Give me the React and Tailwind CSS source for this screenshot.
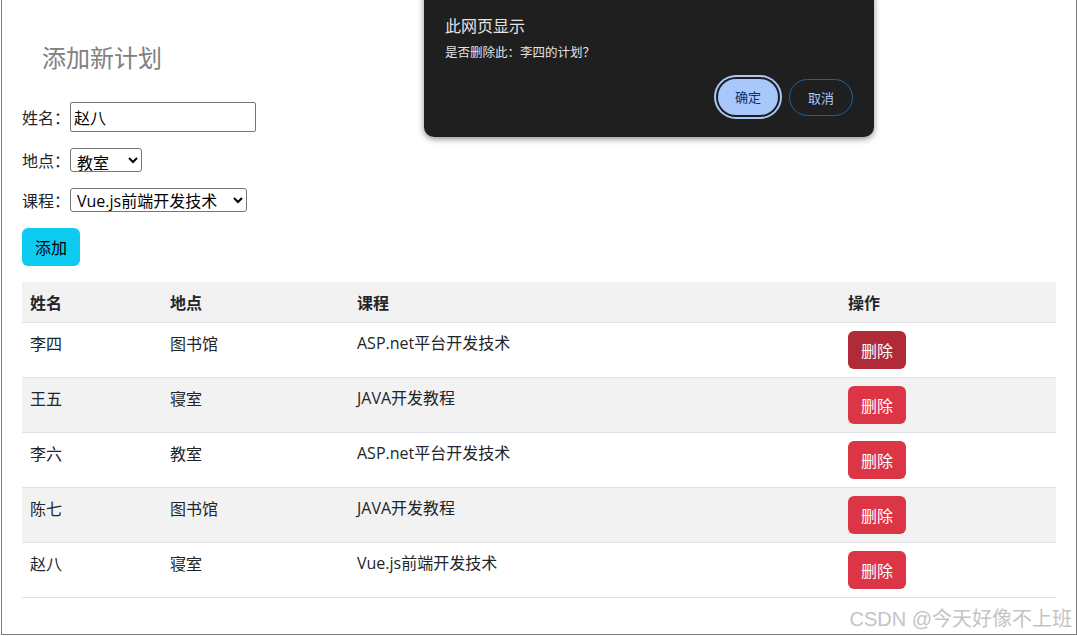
import React from "react";

const rows = [
  { name: "李四", place: "图书馆", course: "ASP.net平台开发技术" },
  { name: "王五", place: "寝室", course: "JAVA开发教程" },
  { name: "李六", place: "教室", course: "ASP.net平台开发技术" },
  { name: "陈七", place: "图书馆", course: "JAVA开发教程" },
  { name: "赵八", place: "寝室", course: "Vue.js前端开发技术" },
];

export default function App() {
  return (
    <div className="flex h-[636px] w-[1077px] overflow-hidden bg-white">
      <div className="relative ml-[1px] h-[635px] w-[1076px] border-x border-b border-[#7f7f7f] bg-white text-[16px] leading-[24px] text-[#212529] font-['Open_Sans','Noto_Sans_CJK_SC',sans-serif]">
        <div className="pl-[20px] pr-[19px] pt-[41px]">
          <h2 className="pl-[20px] text-[24px] font-normal leading-[32px] text-[#808080] font-['Noto_Sans_CJK_SC',sans-serif]">
            添加新计划
          </h2>

          <div className="mt-[29px] flex h-[30px] items-center">
            <span className="w-[48px] font-['Noto_Sans_CJK_SC',sans-serif]">姓名：</span>
            <input
              defaultValue="赵八"
              className="h-[30px] w-[186px] rounded-[2px] border border-[#767676] px-[3px] text-[16px] text-black outline-none font-['Noto_Sans_CJK_SC',sans-serif]"
            />
          </div>

          <div className="mt-[16px] flex h-[24px] items-center">
            <span className="w-[48px] font-['Noto_Sans_CJK_SC',sans-serif]">地点：</span>
            <select
              defaultValue="教室"
              className="h-[24px] w-[72px] rounded-[3px] border border-[#767676] bg-white pl-[2px] text-[16px] leading-[20px] text-black font-['Noto_Sans_CJK_SC',sans-serif]"
            >
              <option>图书馆</option>
              <option>寝室</option>
              <option>教室</option>
            </select>
          </div>

          <div className="mt-[16px] flex h-[24px] items-center">
            <span className="w-[48px] font-['Noto_Sans_CJK_SC',sans-serif]">课程：</span>
            <select
              defaultValue="Vue.js前端开发技术"
              className="h-[24px] w-[177px] rounded-[3px] border border-[#767676] bg-white pl-[2px] text-[16px] leading-[20px] text-black font-['Open_Sans','Noto_Sans_CJK_SC',sans-serif]"
            >
              <option>ASP.net平台开发技术</option>
              <option>JAVA开发教程</option>
              <option>Vue.js前端开发技术</option>
            </select>
          </div>

          <button className="mt-[16px] block h-[38px] w-[58px] rounded-[6px] bg-[#0dcaf0] text-[16px] leading-[24px] text-black font-['Noto_Sans_CJK_SC',sans-serif]">
            添加
          </button>

          <table className="mt-[16px] w-[1034px] table-fixed border-collapse">
            <colgroup>
              <col className="w-[140px]" />
              <col className="w-[187px]" />
              <col className="w-[491px]" />
              <col className="w-[216px]" />
            </colgroup>
            <thead>
              <tr className="bg-[#f2f2f2]">
                {["姓名", "地点", "课程", "操作"].map((h) => (
                  <th
                    key={h}
                    className="border-b border-[#dee2e6] px-[8px] py-[8px] text-left align-top font-bold leading-[24px] font-['Noto_Sans_CJK_SC',sans-serif]"
                  >
                    {h}
                  </th>
                ))}
              </tr>
            </thead>
            <tbody>
              {rows.map((r, i) => (
                <tr key={i} className={i % 2 === 1 ? "bg-[#f2f2f2]" : "bg-white"}>
                  <td className="border-b border-[#dee2e6] px-[8px] py-[8px] align-top leading-[24px] font-['Noto_Sans_CJK_SC',sans-serif]">
                    {r.name}
                  </td>
                  <td className="border-b border-[#dee2e6] px-[8px] py-[8px] align-top leading-[24px] font-['Noto_Sans_CJK_SC',sans-serif]">
                    {r.place}
                  </td>
                  <td className="border-b border-[#dee2e6] px-[8px] py-[8px] align-top leading-[24px]">
                    {r.course}
                  </td>
                  <td className="border-b border-[#dee2e6] px-[8px] py-[8px] align-top">
                    <button
                      className={
                        (i === 0 ? "bg-[#b02a37]" : "bg-[#dc3545]") +
                        " block h-[38px] w-[58px] rounded-[6px] text-[16px] leading-[24px] text-white font-['Noto_Sans_CJK_SC',sans-serif]"
                      }
                    >
                      删除
                    </button>
                  </td>
                </tr>
              ))}
            </tbody>
          </table>
        </div>

        {/* Browser confirm dialog */}
        <div className="absolute left-[422px] top-[-12px] h-[149px] w-[450px] rounded-[10px] bg-[#1f1f1f] shadow-[0_2px_6px_rgba(0,0,0,0.45)] font-['Noto_Sans_CJK_SC',sans-serif]">
          <div className="pl-[21px] pt-[26px] text-[16px] leading-[22px] text-[#e3e3e3]">此网页显示</div>
          <div className="mt-[7px] pl-[21px] text-[12.5px] leading-[18px] text-[#e3e3e3]">
            是否删除此：李四的计划？
          </div>
          <div className="mt-[18px] flex justify-end gap-[11px] pr-[21px]">
            <button className="h-[36px] w-[60px] rounded-full bg-[#a8c7fa] text-[13px] text-[#062e6f] shadow-[0_0_0_2px_#1f1f1f,0_0_0_4px_#a8c7fa]">
              确定
            </button>
            <button className="h-[37px] w-[64px] rounded-full border border-[#1666a6] text-[13px] text-[#a8c7fa]">
              取消
            </button>
          </div>
        </div>

        <div className="absolute bottom-[3px] right-[4px] text-[20px] leading-[24px] text-[#c4c4c4] font-['Liberation_Sans','Noto_Sans_CJK_SC',sans-serif]">
          CSDN @今天好像不上班
        </div>
      </div>
    </div>
  );
}
